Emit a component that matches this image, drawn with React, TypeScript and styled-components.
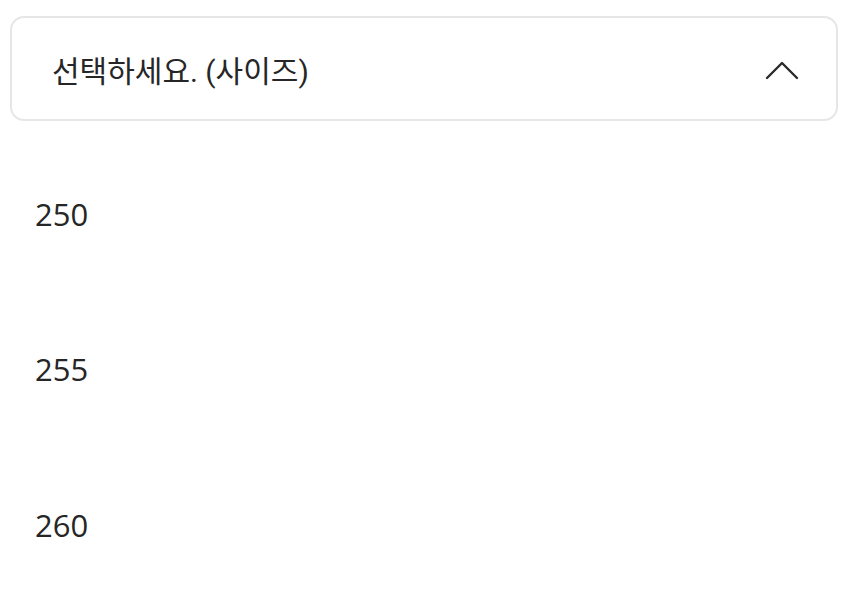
import React, { FC, useState } from 'react';
import styled, { createGlobalStyle } from 'styled-components';

const GlobalStyle = createGlobalStyle`
  body {
    margin: 0;
    background: #fff;
    font-family: Roboto, 'Noto Sans CJK KR', sans-serif;
  }
`;

const sizes = ['250', '255', '260'];

const App: FC = () => {
    const [open, setOpen] = useState(true);

    return (
        <Wrapper>
            <GlobalStyle />
            <SelectBox onClick={() => setOpen(!open)}>
                <Placeholder>선택하세요. (사이즈)</Placeholder>
                <Chevron open={open} />
            </SelectBox>
            {open && (
                <OptionList>
                    {sizes.map(size => (
                        <Option key={size}>{size}</Option>
                    ))}
                </OptionList>
            )}
        </Wrapper>
    );
};

const Chevron: FC<{ open: boolean }> = ({ open }) => (
    <ChevronSvg width="34" height="20" viewBox="0 0 34 20" $open={open}>
        <path d="M2 18 L17 3 L32 18" fill="none" stroke="#2a2a2a" strokeWidth="2.4" strokeLinecap="round" strokeLinejoin="round" />
    </ChevronSvg>
);

const Wrapper = styled.div`
  padding: 16px 12px 0 10px;
`

const SelectBox = styled.div`
  display: flex;
  align-items: center;
  justify-content: space-between;
  height: 101px;
  padding: 0 37px 0 40px;
  border: 2px solid #e6e6e6;
  border-radius: 14px;
  cursor: pointer;
`

const Placeholder = styled.span`
  font-family: Roboto, 'Noto Sans CJK KR', sans-serif;
  font-size: 30px;
  color: #262626;
`

const ChevronSvg = styled.svg<{ $open: boolean }>`
  transform: rotate(${p => (p.$open ? 0 : 180)}deg);
  margin-top: 3px;
`

const OptionList = styled.ul`
  list-style: none;
  margin: 15px 0 0;
  padding: 0;
`

const Option = styled.li`
  display: flex;
  align-items: center;
  height: 155.5px;
  padding-left: 25px;
  font-family: 'Open Sans', 'Noto Sans CJK KR', sans-serif;
  font-size: 31px;
  color: #262626;
`

export default App;
